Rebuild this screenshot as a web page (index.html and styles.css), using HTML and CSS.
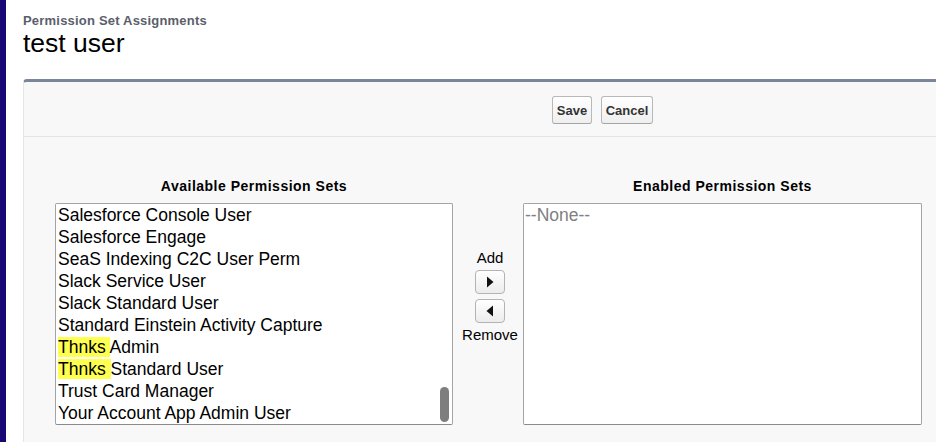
FILE: index.html
```html
<!DOCTYPE html>
<html>
<head>
<meta charset="utf-8">
<link rel="stylesheet" href="styles.css">
</head>
<body>
<div class="page">
  <div class="strip"></div>
  <div class="main">
    <div class="header">
      <div class="subtitle">Permission Set Assignments</div>
      <div class="title">test user</div>
    </div>
    <div class="panel">
      <div class="btnrow">
        <button class="btn save">Save</button>
        <button class="btn cancel">Cancel</button>
      </div>
      <div class="content">
        <div class="colhead">Available Permission Sets</div>
        <div></div>
        <div class="colhead">Enabled Permission Sets</div>
        <div class="listbox">
          <div class="item">Salesforce Console User</div>
          <div class="item">Salesforce Engage</div>
          <div class="item">SeaS Indexing C2C User Perm</div>
          <div class="item">Slack Service User</div>
          <div class="item">Slack Standard User</div>
          <div class="item">Standard Einstein Activity Capture</div>
          <div class="item"><span class="hl">Thnks </span>Admin</div>
          <div class="item"><span class="hl">Thnks </span>Standard User</div>
          <div class="item">Trust Card Manager</div>
          <div class="item">Your Account App Admin User</div>
          <div class="thumb"></div>
        </div>
        <div class="mid">
          <div class="midlabel">Add</div>
          <button class="arrow first"><svg width="8" height="12" viewBox="0 0 8 12"><polygon points="1,0.5 7.5,6 1,11.5" fill="#111"/></svg></button>
          <button class="arrow"><svg width="8" height="12" viewBox="0 0 8 12"><polygon points="7,0.5 0.5,6 7,11.5" fill="#111"/></svg></button>
          <div class="midlabel remove">Remove</div>
        </div>
        <div class="listbox right">
          <div class="item none">--None--</div>
        </div>
      </div>
    </div>
  </div>
</div>
</body>
</html>
```

FILE: styles.css
```css
html, body {
  margin: 0;
  padding: 0;
  background: #fff;
  overflow: hidden;
  font-family: "Liberation Sans", Arial, sans-serif;
}
.page {
  display: flex;
  height: 442px;
  overflow: hidden;
}
.strip {
  width: 6px;
  flex: none;
  background: #170873;
}
.main {
  flex: 1;
  min-width: 0;
  display: flex;
  flex-direction: column;
  padding-left: 17px;
}
.header {
  padding-top: 14px;
}
.subtitle {
  font-size: 13px;
  line-height: 14px;
  font-weight: bold;
  letter-spacing: 0.2px;
  color: #5b5e6b;
}
.title {
  font-size: 26.5px;
  line-height: 30px;
  color: #000;
}
.panel {
  flex: 1;
  min-height: 0;
  margin-top: 21px;
  background: #f8f8f8;
  border-top: 3px solid #7d859b;
  border-left: 1px solid #e6e6e6;
  border-top-left-radius: 4px;
  overflow: hidden;
}
.btnrow {
  display: flex;
  gap: 9px;
  padding: 14px 0 12px 528px;
  border-bottom: 1px solid #e3e3e3;
}
.btn {
  height: 28px;
  padding: 0;
  font-family: "Liberation Sans", Arial, sans-serif;
  font-size: 13px;
  font-weight: bold;
  color: #333;
  background: linear-gradient(#ffffff, #efefef);
  border: 1px solid #b8b8b8;
  border-bottom-color: #a5a5a5;
  border-radius: 3px;
}
.btn.save {
  width: 40px;
}
.btn.cancel {
  width: 52px;
}
.content {
  display: grid;
  grid-template-columns: 398px 70px 399px;
  grid-template-rows: 15px auto;
  row-gap: 9px;
  padding: 42px 0 0 31px;
}
.colhead {
  font-size: 14px;
  line-height: 15px;
  font-weight: bold;
  letter-spacing: 0.5px;
  color: #000;
  text-align: center;
  white-space: nowrap;
}
.listbox {
  position: relative;
  height: 220px;
  background: #fff;
  border: 1px solid #a4a4a4;
  border-bottom-color: #8a8a8a;
  border-radius: 2px;
  overflow: hidden;
}
.item {
  font-size: 17.5px;
  line-height: 22px;
  padding-left: 2px;
  color: #000;
  white-space: nowrap;
}
.item.none {
  color: #808080;
  padding-left: 1px;
}
.hl {
  background: #ffff4f;
}
.thumb {
  position: absolute;
  right: 3px;
  bottom: 2px;
  width: 9px;
  height: 35px;
  border-radius: 5px;
  background: #7e7e7e;
}
.mid {
  display: flex;
  flex-direction: column;
  align-items: center;
  padding-top: 46px;
  padding-left: 4px;
}
.midlabel {
  font-size: 15px;
  line-height: 17px;
  color: #000;
}
.midlabel.remove {
  margin-top: 3px;
}
.arrow {
  width: 30px;
  height: 24px;
  margin-top: 5px;
  padding: 0;
  display: flex;
  align-items: center;
  justify-content: center;
  background: linear-gradient(#ffffff, #ececec);
  border: 1px solid #b3b3b3;
  border-radius: 4px;
}
.arrow.first {
  margin-top: 4px;
}
```
